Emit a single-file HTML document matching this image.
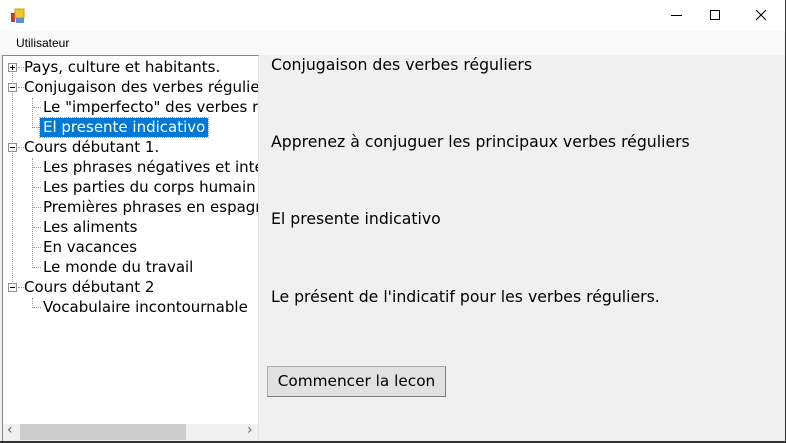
<!DOCTYPE html>
<html><head><meta charset="utf-8"><style>
*{margin:0;padding:0;box-sizing:border-box}
body{width:786px;height:443px;overflow:hidden;background:#f0f0f0;font-family:"DejaVu Sans",sans-serif;position:relative}
.a{position:absolute;white-space:nowrap}
#title{left:0;top:0;width:786px;height:31px;background:#fff}
#menu{left:0;top:31px;width:786px;height:24px;background:#f9f9f9;font-size:12px;line-height:24px;padding-left:16px;color:#000;font-family:"Liberation Sans",sans-serif}
#tree{left:2px;top:55px;width:257px;height:387px;background:#fff;border-left:1px solid #828790;border-top:1px solid #828790;border-right:1px solid #e3e3e3;overflow:hidden}
.r{position:absolute;font-size:15px;line-height:20px;height:20px;color:#000;white-space:nowrap}
.box{position:absolute;width:9px;height:9px;border:1px solid #919191;background:#fff}
.box:before{content:"";position:absolute;left:1px;top:3px;width:5px;height:1px;background:#000}
.plus:after{content:"";position:absolute;left:3px;top:1px;width:1px;height:5px;background:#000}
.vl{position:absolute;width:1px;border-left:1px dotted #a0a0a0}
.hl{position:absolute;height:1px;border-top:1px dotted #a0a0a0}
.lbl{position:absolute;left:271px;font-size:15.7px;color:#000}
</style></head><body>
<div class="a" id="title">
 <svg style="position:absolute;left:10px;top:8px" width="16" height="16"><rect x="1" y="5" width="4" height="9" fill="#c33"/><rect x="5" y="1" width="9" height="9" fill="#f4c430" stroke="#c8a000"/><rect x="6" y="10" width="8" height="5" fill="#5b8fd6"/></svg>
 <div class="a" style="left:671px;top:15px;width:11px;height:1px;background:#000"></div>
 <div class="a" style="left:710px;top:10px;width:10px;height:10px;border:1px solid #000"></div>
 <svg style="position:absolute;left:755px;top:9px" width="12" height="12"><path d="M1 1L11 11M11 1L1 11" stroke="#000" stroke-width="1.1"/></svg>
</div>
<div class="a" id="menu">Utilisateur</div>
<div class="a" id="tree">
 <div class="vl" style="left:9px;top:12px;height:220px"></div>
 <div class="vl" style="left:29px;top:42px;height:30px"></div>
 <div class="vl" style="left:29px;top:102px;height:110px"></div>
 <div class="vl" style="left:29px;top:242px;height:10px"></div>
 <div class="hl" style="left:15px;top:11px;width:6px"></div>
 <div class="hl" style="left:15px;top:31px;width:6px"></div>
 <div class="hl" style="left:15px;top:91px;width:6px"></div>
 <div class="hl" style="left:15px;top:231px;width:6px"></div>
 <div class="hl" style="left:30px;top:51px;width:8px"></div>
 <div class="hl" style="left:30px;top:71px;width:8px"></div>
 <div class="hl" style="left:30px;top:111px;width:8px"></div>
 <div class="hl" style="left:30px;top:131px;width:8px"></div>
 <div class="hl" style="left:30px;top:151px;width:8px"></div>
 <div class="hl" style="left:30px;top:171px;width:8px"></div>
 <div class="hl" style="left:30px;top:191px;width:8px"></div>
 <div class="hl" style="left:30px;top:211px;width:8px"></div>
 <div class="hl" style="left:30px;top:251px;width:8px"></div>
 <div class="box plus" style="left:5px;top:7px"></div>
 <div class="box" style="left:5px;top:27px"></div>
 <div class="box" style="left:5px;top:87px"></div>
 <div class="box" style="left:5px;top:227px"></div>
 <div class="r" style="left:21px;top:1px">Pays, culture et habitants.</div>
 <div class="r" style="left:21px;top:21px">Conjugaison des verbes réguliers</div>
 <div class="r" style="left:40px;top:41px">Le "imperfecto" des verbes réguliers</div>
 <div class="r" style="left:37px;top:62px;height:19px;line-height:19px;background:#0078d7;color:#fff;padding:0 3px;outline:1px dotted #f0a000">El presente indicativo</div>
 <div class="r" style="left:21px;top:81px">Cours débutant 1.</div>
 <div class="r" style="left:40px;top:101px">Les phrases négatives et interrogatives</div>
 <div class="r" style="left:40px;top:121px">Les parties du corps humain</div>
 <div class="r" style="left:40px;top:141px">Premières phrases en espagnol</div>
 <div class="r" style="left:40px;top:161px">Les aliments</div>
 <div class="r" style="left:40px;top:181px">En vacances</div>
 <div class="r" style="left:40px;top:201px">Le monde du travail</div>
 <div class="r" style="left:21px;top:221px">Cours débutant 2</div>
 <div class="r" style="left:40px;top:241px">Vocabulaire incontournable</div>
 <div class="a" style="left:0;top:368px;width:256px;height:17px;background:#f0f0f0"></div>
 <div class="a" style="left:17px;top:368px;width:166px;height:16px;background:#cdcdcd"></div>
 <div class="a" style="left:4px;top:366px;font-size:14px;color:#606060">&#8249;</div>
 <div class="a" style="left:244px;top:366px;font-size:14px;color:#606060">&#8250;</div>
</div>
<div class="lbl a" style="top:55px">Conjugaison des verbes réguliers</div>
<div class="lbl a" style="top:132px">Apprenez à conjuguer les principaux verbes réguliers</div>
<div class="lbl a" style="top:209px">El presente indicativo</div>
<div class="lbl a" style="top:287px">Le présent de l'indicatif pour les verbes réguliers.</div>
<div class="a" style="left:267px;top:366px;width:179px;height:31px;background:#e1e1e1;border:1px solid #adadad;border-right-color:#7a7a7a;border-bottom-color:#7a7a7a;font-size:15.3px;line-height:29px;text-align:center">Commencer la lecon</div>
<div class="a" style="left:785px;top:0;width:1px;height:443px;background:#333"></div>
<div class="a" style="left:0;top:441px;width:786px;height:2px;background:#333"></div>
</body></html>
